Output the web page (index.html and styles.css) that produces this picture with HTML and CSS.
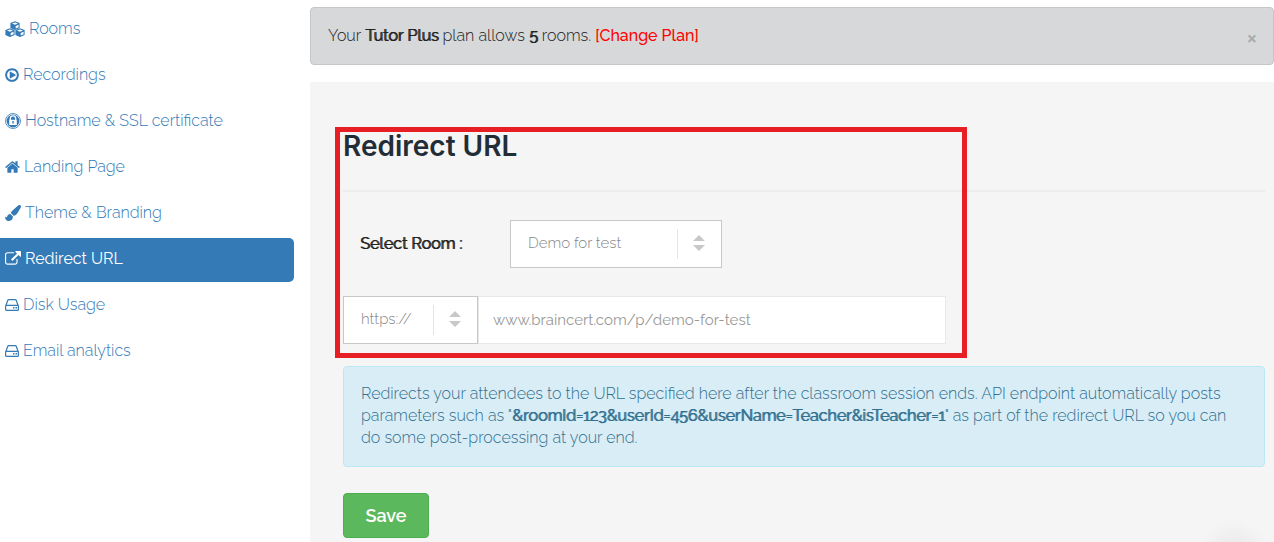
FILE: index.html
```html
<!DOCTYPE html>
<html lang="en">
<head>
    <meta charset="UTF-8">
    <meta name="viewport" content="width=device-width, initial-scale=1.0">
    <title>Redirect URL</title>
    <link rel="stylesheet" href="styles.css">
</head>
<body>
    <div class="container">
        <nav class="sidebar">
            <ul class="menu">
                <li><a href="#">
                    <svg class="icon" width="20" height="16" viewBox="0 0 20 16" aria-hidden="true">
                        <g id="cube">
                            <path fill="currentColor" d="M10 .3l4.600 1.800v4.800L10 9.100 5.400 6.900V2.100z"/>
                            <path fill="#fff" d="M10 1.400l3 1.100-3 1.200-3-1.200zM10.700 4.900l2.900-1.200v2.500l-2.900 1.400z"/>
                        </g>
                        <use href="#cube" x="-5" y="7"/>
                        <use href="#cube" x="5" y="7"/>
                    </svg>
                    Rooms
                </a></li>
                <li><a href="#">
                    <svg class="icon" width="14" height="16" viewBox="128 0 1536 1792" aria-hidden="true"><path fill="currentColor" d="M1312 896q0 37-32 55l-544 320q-15 9-32 9-16 0-32-8-32-19-32-56v-640q0-37 32-56 33-18 64 1l544 320q32 18 32 55zm128 0q0-148-73-273t-198-198-273-73-273 73-198 198-73 273 73 273 198 198 273 73 273-73 198-198 73-273zm224 0q0 209-103 385.500t-279.500 279.500-385.500 103-385.500-103-279.500-279.500-103-385.500 103-385.500 279.500-279.500 385.500-103 385.500 103 279.500 279.500 103 385.500z"/></svg>
                    Recordings
                </a></li>
                <li><a href="#">
                    <svg class="icon" width="16" height="16" viewBox="0 0 16 16" aria-hidden="true">
                        <circle cx="8" cy="8" r="7.500" fill="none" stroke="currentColor" stroke-width=".8"/>
                        <circle cx="8" cy="8" r="6.400" fill="currentColor"/>
                        <path d="M5.300 7V5.500a2.700 2.700 0 0 1 5.400 0V7" fill="none" stroke="#fff" stroke-width="1.300"/>
                        <path d="M4.200 6.800h7.600v5.200H4.200z" fill="#fff"/>
                        <path d="M7.300 8h1.400v2.600H7.300z" fill="currentColor"/>
                    </svg>
                    Hostname &amp; SSL certificate
                </a></li>
                <li><a href="#">
                    <svg class="icon" width="15" height="16" viewBox="64 0 1664 1792" aria-hidden="true"><path fill="currentColor" d="M1472 992v480q0 26-19 45t-45 19h-384v-384h-256v384h-384q-26 0-45-19t-19-45v-480q0-1 .5-3t.5-3l575-474 575 474q1 2 1 6zm223-69l-62 74q-8 9-21 11h-3q-13 0-21-7l-692-577-692 577q-12 8-24 7-13-2-21-11l-62-74q-8-10-7-23.500t11-21.500l719-599q32-26 76-26t76 26l244 204v-195q0-14 9-23t23-9h192q14 0 23 9t9 23v408l219 182q10 8 11 21.500t-7 23.500z"/></svg>
                    Landing Page
                </a></li>
                <li><a href="#">
                    <svg class="icon" width="16" height="16" viewBox="0 0 16 16" aria-hidden="true"><path fill="currentColor" d="M14.500 0c.9 0 1.500.6 1.500 1.400 0 .6-.2 1.100-.5 1.600-2.100 3.900-3.500 5.900-4.600 6.800-.7.7-1.500 1-2.300.9L6 8.200c0-.9.300-1.600 1-2.200l6.100-5.400c.4-.4.900-.6 1.400-.6zM5.300 9l2.600 2.600c.1 2.700-1.400 4.400-4 4.400C1.200 16 0 14 0 11.500c.3.200 1 .8 1.400.8.300 0 .5-.2.6-.4C2.700 9.900 3.500 9.100 5.300 9z"/></svg>
                    Theme &amp; Branding
                </a></li>
                <li class="active"><a href="#">
                    <svg class="icon" width="16" height="16" viewBox="0 0 1792 1792" aria-hidden="true"><path fill="currentColor" d="M1408 928v320q0 119-84.500 203.500t-203.500 84.500h-832q-119 0-203.500-84.500t-84.500-203.500v-832q0-119 84.500-203.500t203.500-84.500h704q14 0 23 9t9 23v64q0 14-9 23t-23 9h-704q-66 0-113 47t-47 113v832q0 66 47 113t113 47h832q66 0 113-47t47-113v-320q0-14 9-23t23-9h64q14 0 23 9t9 23zm384-864v512q0 26-19 45t-45 19-45-19l-176-176-652 652q-10 10-23 10t-23-10l-114-114q-10-10-10-23t10-23l652-652-176-176q-19-19-19-45t19-45 45-19h512q26 0 45 19t19 45z"/></svg>
                    Redirect URL
                </a></li>
                <li><a href="#">
                    <svg class="icon" width="14" height="16" viewBox="0 0 14 16" aria-hidden="true">
                        <g id="disk">
                            <path fill="none" stroke="currentColor" stroke-width="1.200" d="M.6 9.200L2.800 3.300q.3-.7 1-.7h6.400q.7 0 1 .7l2.200 5.900v3.200q0 1-1 1H1.600q-1 0-1-1V9.200q0-.9 1-.9h10.800q1 0 1 .9"/>
                            <path fill="currentColor" d="M8 10h1.500v1.500H8zM10.500 10H12v1.500h-1.500z"/>
                        </g>
                    </svg>
                    Disk Usage
                </a></li>
                <li><a href="#">
                    <svg class="icon" width="14" height="16" viewBox="0 0 14 16" aria-hidden="true"><use href="#disk"/></svg>
                    Email analytics
                </a></li>
            </ul>
        </nav>
        <main class="content">
            <div class="alert">
                <span>Your <b>Tutor Plus</b> plan allows <b>5</b> rooms. <a href="#">[Change Plan]</a></span>
                <button class="close" type="button" aria-label="Close">×</button>
            </div>
            <form class="panel">
                <div class="highlight">
                    <h1>Redirect URL</h1>
                    <div class="room-row">
                        <label for="room">Select Room :</label>
                        <div class="select room">
                            <select id="room"><option>Demo for test</option></select>
                            <svg width="12" height="16" viewBox="0 0 12 16" aria-hidden="true"><path fill="#c8c8c8" d="M6 0l6 6H0zM0 10h12l-6 6z"/></svg>
                        </div>
                    </div>
                    <div class="url-row">
                        <div class="select protocol">
                            <select aria-label="Protocol"><option>https://</option><option>http://</option></select>
                            <svg width="12" height="16" viewBox="0 0 12 16" aria-hidden="true"><path fill="#c8c8c8" d="M6 0l6 6H0zM0 10h12l-6 6z"/></svg>
                        </div>
                        <input type="text" aria-label="Redirect URL" value="www.braincert.com/p/demo-for-test">
                    </div>
                </div>
                <p class="info">Redirects your attendees to the URL specified here after the classroom session ends. API endpoint automatically posts parameters such as "<b>&amp;roomId=123&amp;userId=456&amp;userName=Teacher&amp;isTeacher=1</b>" as part of the redirect URL so you can do some post-processing at your end.</p>
                <button class="save" type="button">Save</button>
            </form>
        </main>
    </div>
</body>
</html>
```
FILE: styles.css
```css
*,
*::after {
    box-sizing: border-box;
}
body {
    margin: 0;
    font-family: Raleway, Lato, sans-serif;
    font-size: 16px;
    font-weight: 300;
    line-height: 22px;
    color: #222;
    background-color: #fff;
}
b,
.room-row label {
    font-weight: 400;
    text-shadow: 1px 0 0 currentColor;
}
.container {
    display: flex;
    min-height: 100vh;
}
.sidebar {
    width: 294px;
    flex-shrink: 0;
    margin-right: 16px;
    padding-top: 8px;
}
.menu {
    list-style: none;
    margin: 0;
    padding: 0;
}
.menu li {
    margin-bottom: 2px;
}
.menu a {
    display: flex;
    align-items: center;
    gap: 4px;
    height: 44px;
    padding: 0 0 2px 5px;
    color: #337ab7;
    text-decoration: none;
    border-radius: 0 5px 5px 0;
}
.menu .active a {
    color: #fff;
    font-weight: 400;
    background-color: #337ab7;
}
.content {
    display: flex;
    flex-direction: column;
    flex-grow: 1;
    min-width: 0;
    padding-top: 7px;
}
.alert {
    display: flex;
    align-items: center;
    justify-content: space-between;
    height: 58px;
    margin-bottom: 17px;
    padding: 0 16px 0 17px;
    border: 1px solid #c4c6c8;
    border-radius: 4px;
    background-color: #d6d8d9;
}
.alert a {
    color: #f00;
    font-weight: 500;
    text-decoration: none;
}
.close {
    padding: 4px 0 0;
    border: none;
    background: none;
    color: #a9abac;
    font: bold 18px "Open Sans", sans-serif;
    cursor: pointer;
}
.panel {
    flex-grow: 1;
    padding: 45px 9px 4px 33px;
    background-color: #f5f5f5;
    background-image: radial-gradient(circle at right 40px bottom -14px, #e6e6e6, #f5f5f5 36px);
}
.highlight {
    position: relative;
}
/* red frame over the form fields */
.highlight::after {
    content: "";
    position: absolute;
    top: 0;
    left: -8px;
    width: 632px;
    height: 231px;
    border: 5px solid #e81e25;
    pointer-events: none;
}
h1 {
    margin: 0 0 28px;
    padding: 2px 0 27px;
    border-bottom: 2px solid #ededed;
    color: #222d38;
    font-family: "Proxima Nova", Inter, sans-serif;
    font-size: 28px;
    font-weight: 600;
    line-height: 34px;
}
.room-row {
    display: flex;
    align-items: center;
    margin-bottom: 28px;
}
.room-row label {
    width: 167px;
    padding-left: 17px;
}
.select {
    position: relative;
    height: 48px;
}
.room {
    width: 212px;
}
.protocol {
    width: 135px;
    flex-shrink: 0;
}
.select select {
    appearance: none;
    width: 100%;
    height: 100%;
    padding: 0 44px 2px 17px;
    border: 1px solid #c8c8c8;
    border-radius: 0;
    background-color: #fff;
    color: #888;
    font: inherit;
    font-size: 15px;
}
/* divider left of the arrows */
.select::after {
    content: "";
    position: absolute;
    top: 9px;
    right: 44px;
    height: 30px;
    border-left: 1px solid #e4e4e4;
    pointer-events: none;
}
.select svg {
    position: absolute;
    top: 15px;
    right: 17px;
    pointer-events: none;
}
.url-row {
    display: flex;
    max-width: 603px;
}
.url-row input {
    flex-grow: 1;
    min-width: 0;
    height: 48px;
    padding: 0 14px;
    border: 1px solid #e8e8e8;
    background-color: #fff;
    color: #999;
    font: inherit;
    font-size: 15px;
    font-weight: 400;
}
.info {
    margin: 22px 0 26px;
    padding: 16px 17px 17px;
    border: 1px solid #bce8f1;
    border-radius: 4px;
    background-color: #d9edf7;
    color: #31708f;
}
.save {
    width: 86px;
    height: 45px;
    border: 1px solid #4cae4c;
    border-radius: 4px;
    background-color: #5cb85c;
    color: #fff;
    font: inherit;
    font-size: 18px;
    font-weight: 600;
    cursor: pointer;
}
```
